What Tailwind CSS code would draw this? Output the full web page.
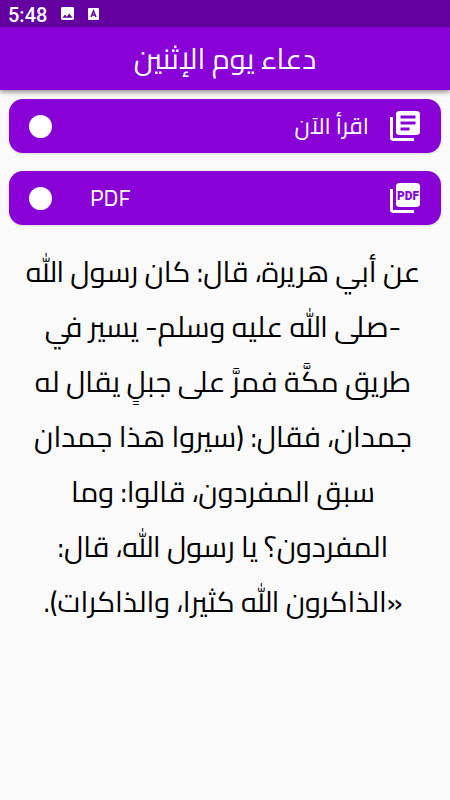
<!DOCTYPE html>
<html lang="ar" dir="rtl">

<head>
    <meta charset="UTF-8">
    <meta name="viewport" content="width=device-width, initial-scale=1.0">
    <title>دعاء يوم الإثنين</title>
    <script src="https://cdn.jsdelivr.net/npm/@tailwindcss/browser@4"></script>
</head>

<body class="bg-[#fafafa] min-h-screen font-['Cairo','DejaVu_Sans',sans-serif]">
    <div dir="ltr" class="bg-[#6500a0] h-[27px] px-2 flex items-center gap-[14px] text-white">
        <span class="font-['Roboto',sans-serif] font-medium text-xl leading-6 pt-[2px]">5:48</span>
        <svg class="w-[13px] h-[13px]" viewBox="3 3 18 18" fill="currentColor">
            <path d="M21 19V5c0-1.100-.9-2-2-2H5c-1.100 0-2 .9-2 2v14c0 1.100.9 2 2 2h14c1.100 0 2-.9 2-2zM8.500 13.500l2.500 3.010L14.500 12l4.500 6H5l3.500-4.500z" />
        </svg>
        <svg class="w-[11px] h-3" viewBox="0 0 11 12">
            <rect width="11" height="12" rx="1" fill="#fff" />
            <path d="M3 9 5.500 3 8 9M4 7h3" fill="none" stroke="#6500a0" stroke-width="1.500" />
        </svg>
    </div>
    <header class="bg-[#8800d6] h-[63px] flex items-center justify-center shadow-[0_2px_5px_rgba(0,0,0,0.45)]">
        <h1 class="text-white text-[29px] leading-10">دعاء يوم الإثنين</h1>
    </header>

    <main class="px-[9px] pt-[9px]">
        <div class="flex flex-col gap-[18px]">
            <button class="bg-[#8800d6] text-white w-full h-[54px] rounded-[14px] px-[18px] flex items-center shadow-sm">
                <svg class="w-9 h-9" viewBox="0 0 24 24" fill="currentColor">
                    <path d="M4 6H2v14c0 1.100.9 2 2 2h14v-2H4V6zm16-4H8c-1.100 0-2 .9-2 2v12c0 1.100.9 2 2 2h12c1.100 0 2-.9 2-2V4c0-1.100-.9-2-2-2zm-1 9H9V9h10v2zm-4 4H9v-2h6v2zm4-8H9V5h10v2z" />
                </svg>
                <span class="flex-1 text-start ps-[18px] text-[23px] leading-8">اقرأ الآن</span>
                <span class="w-[23px] h-[23px] rounded-full bg-white me-[2px]"></span>
            </button>
            <button class="bg-[#8800d6] text-white w-full h-[54px] rounded-[14px] px-[18px] flex items-center shadow-sm">
                <svg class="w-9 h-9" viewBox="0 0 24 24" fill="currentColor">
                    <path d="M4 6H2v14c0 1.100.9 2 2 2h14v-2H4V6zm16-4H8c-1.100 0-2 .9-2 2v12c0 1.100.9 2 2 2h12c1.100 0 2-.9 2-2V4c0-1.100-.9-2-2-2z" />
                    <text x="14" y="13" text-anchor="middle" direction="ltr" font-family="Roboto, sans-serif" font-weight="900" font-size="8" fill="#8800d6">PDF</text>
                </svg>
                <span class="flex-1 text-end pe-[38px] text-[23px] leading-8">PDF</span>
                <span class="w-[23px] h-[23px] rounded-full bg-white me-[2px]"></span>
            </button>
        </div>

        <p class="mt-[19px] ps-1 text-center text-black text-[29px] leading-[55px] whitespace-nowrap">
            عن أبي هريرة، قال: كان رسول الله<br>
            -صلى الله عليه وسلم- يسير في<br>
            طريق مكَّة فمرَّ على جبلٍ يقال له<br>
            جمدان، فقال: (سيروا هذا جمدان<br>
            سبق المفردون، قالوا: وما<br>
            المفردون؟ يا رسول الله، قال:<br>
            «الذاكرون الله كثيرا، والذاكرات).
        </p>
    </main>
</body>

</html>
